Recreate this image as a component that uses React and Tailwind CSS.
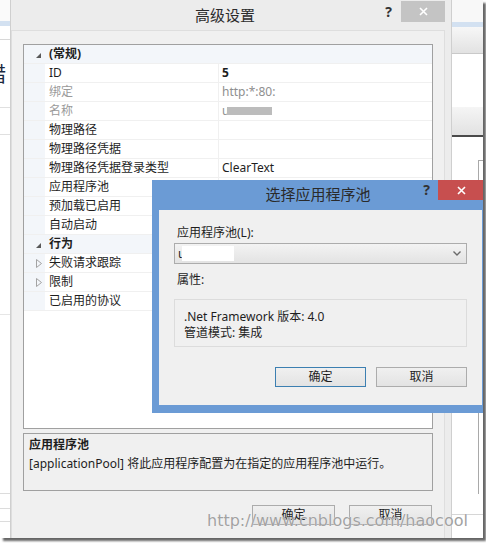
import React from "react";

function CatTri() {
  return (
    <svg width="5" height="5" viewBox="0 0 5 5">
      <polygon points="5,0 5,5 0,5" fill="#595959" />
    </svg>
  );
}

function ExpTri() {
  return (
    <svg width="6" height="9" viewBox="0 0 6 9">
      <polygon points="0.5,0.5 5.5,4.5 0.5,8.5" fill="none" stroke="#a3a3a3" strokeWidth="1" />
    </svg>
  );
}

function CatRow({ label }) {
  return (
    <div className="flex h-[19px] border-b border-[#f0f0f0] bg-[#f3f6fa]">
      <div className="w-[21px] flex items-center justify-end pr-[4px] pt-[2px]">
        <CatTri />
      </div>
      <div className="flex-1 pl-[4px] leading-[18px] font-bold text-[#1e1e1e]">{label}</div>
    </div>
  );
}

function Row({ name, value, gray, bold, expand, children }) {
  return (
    <div className="flex h-[19px] border-b border-[#f0f0f0]">
      <div className="w-[21px] bg-[#f3f6fa] flex items-center justify-end pr-[3px]">
        {expand ? <ExpTri /> : null}
      </div>
      <div
        className={`w-[174px] border-r border-[#f0f0f0] pl-[4px] leading-[18px] ${
          gray ? "text-[#9a9a9a]" : "text-[#1e1e1e]"
        }`}
      >
        {name}
      </div>
      <div
        className={`flex-1 pl-[3px] leading-[18px] flex items-center ${
          gray ? "text-[#8f8f8f]" : "text-[#1e1e1e]"
        } ${bold ? "font-bold" : ""}`}
      >
        {value}
        {children}
      </div>
    </div>
  );
}

function WinButton({ children, primary }) {
  return (
    <div
      className={`flex items-center justify-center border bg-gradient-to-b from-[#f0f0f0] to-[#e3e3e3] text-[#1e1e1e] ${
        primary ? "border-[#3c7fb1]" : "border-[#acacac]"
      }`}
    >
      {children}
    </div>
  );
}

function LeftStrip() {
  return (
    <div className="w-[10px] shrink-0 flex flex-col bg-white overflow-hidden">
      <div className="h-[21px] bg-[#fafafa]" />
      <div className="h-[5px] bg-[#d3e1f1]" />
      <div className="h-[14px] border-b border-[#d8d8d8]" />
      <div className="h-[24px]" />
      <div className="h-[22px] -ml-[14px] text-[20px] leading-[22px] text-[#1a2a40] whitespace-nowrap">措</div>
      <div className="h-[22px] border-b border-[#e0e0e0]" />
      <div className="h-[27px] border-b border-[#e0e0e0]" />
      <div className="h-[180px] border-b border-[#e6e6e6]" />
      <div className="h-[179px] border-b border-[#dcdcdc]" />
      <div className="h-[15px] border-b border-[#dcdcdc]" />
      <div className="h-[13px] border-b border-[#dcdcdc]" />
      <div className="flex-1" />
    </div>
  );
}

function RightStrip() {
  return (
    <div className="w-[31px] shrink-0 flex flex-col bg-white overflow-hidden">
      <div className="h-[22px] bg-[#f8f8f8]" />
      <div className="h-[5px] bg-[#d3e1f1]" />
      <div className="h-[27px] bg-gradient-to-b from-[#f7f7f7] to-[#e2e2e2] border-b border-[#c9c9c9]" />
      <div className="h-[53px] bg-white" />
      <div className="h-[28px] bg-gradient-to-b from-[#f5f5f5] to-[#e2e2e2]" />
      <div className="h-[2px] bg-[#4a4a4a]" />
      <div className="h-[23px]" />
      <div className="h-[334px] ml-[26px] border-l border-t border-[#a9a9a9]" />
      <div className="h-[21px] border-b border-[#d6d6d6]" />
      <div className="flex-1" />
    </div>
  );
}

function OuterDialog() {
  return (
    <div className="w-[442px] shrink-0 flex flex-col bg-[#ececec] border-l border-r border-[#cfcfcf]">
      <div className="h-[30px] shrink-0 flex items-start">
        <div className="flex-1" />
        <div className="text-[15px] leading-[30px] text-[#2b2b2b] -ml-[6px]">高级设置</div>
        <div className="flex-1 flex justify-end items-start pr-[6px]">
          <div className="text-[14px] font-bold leading-[20px] mt-[2px] mr-[9px] text-[#333]">?</div>
          <div className="w-[44px] h-[21px] mt-[1px] bg-[#c4c4c4] flex items-center justify-center">
            <svg width="9" height="9" viewBox="0 0 9 9">
              <path d="M1 1 L8 8 M8 1 L1 8" stroke="#fff" strokeWidth="1.6" />
            </svg>
          </div>
        </div>
      </div>
      <div className="flex-1 mr-[6px] bg-[#f0f0f0] border-l border-t border-r border-[#dedede] px-[11px] pt-[13px] flex flex-col">
        <div className="h-[385px] border border-[#a0a0a0] bg-white flex flex-col">
          <CatRow label="(常规)" />
          <Row name="ID" value="5" bold />
          <Row name="绑定" value="http:*:80:" gray />
          <Row name="名称" value="u" gray>
            <div className="ml-[-2px] w-[45px] h-[8px] bg-[#bcbcbc] blur-[0.5px]" />
          </Row>
          <Row name="物理路径" value="" />
          <Row name="物理路径凭据" value="" />
          <Row name="物理路径凭据登录类型" value="ClearText" />
          <Row name="应用程序池" value="" />
          <Row name="预加载已启用" value="" />
          <Row name="自动启动" value="" />
          <CatRow label="行为" />
          <Row name="失败请求跟踪" value="" expand />
          <Row name="限制" value="" expand />
          <Row name="已启用的协议" value="" />
        </div>
        <div className="mt-[4px] h-[58px] border border-[#a0a0a0] bg-[#f0f0f0] pl-[5px] pt-[1px] text-[#1e1e1e]">
          <div className="font-bold leading-[19px]">应用程序池</div>
          <div className="leading-[19px]">[applicationPool] 将此应用程序配置为在指定的应用程序池中运行。</div>
        </div>
        <div className="mt-[14px] flex justify-end gap-[14px] pr-[1px] h-[24px]">
          <div className="w-[83px] flex flex-col">
            <WinButton>确定</WinButton>
          </div>
          <div className="w-[83px] flex flex-col">
            <WinButton>取消</WinButton>
          </div>
        </div>
      </div>
    </div>
  );
}

function InnerDialog() {
  return (
    <div className="absolute left-[152px] top-[180px] w-[337px] h-[233px] bg-[#6b9bd5] flex flex-col">
      <div className="h-[30px] shrink-0 flex items-start">
        <div className="flex-1" />
        <div className="text-[15px] leading-[28px] text-[#2a2a2a]">选择应用程序池</div>
        <div className="flex-1 flex justify-end items-start pr-[5px]">
          <div className="text-[14px] font-bold leading-[18px] mt-[1px] mr-[8px] text-[#333]">?</div>
          <div className="w-[46px] h-[20px] bg-[#c74f4f] flex items-center justify-center">
            <svg width="9" height="9" viewBox="0 0 9 9">
              <path d="M1 1 L8 8 M8 1 L1 8" stroke="#fff" strokeWidth="1.6" />
            </svg>
          </div>
        </div>
      </div>
      <div className="mx-[7px] mb-[8px] flex-1 bg-[#f0f0f0] px-[15px] pt-[15px] flex flex-col text-[#1e1e1e]">
        <div className="pl-[3px] leading-[16px]">应用程序池(L):</div>
        <div className="mt-[2px] h-[21px] border border-[#acacac] bg-gradient-to-b from-[#f3f3f3] to-[#e3e3e3] flex items-center">
          <div className="pl-[3px] leading-[16px]">ι</div>
          <div className="w-[52px] h-[15px] bg-white" />
          <div className="flex-1" />
          <svg className="mr-[5px]" width="8" height="5" viewBox="0 0 8 5">
            <path d="M0.5 0.5 L4 4 L7.5 0.5" fill="none" stroke="#6a6a6a" strokeWidth="1.4" />
          </svg>
        </div>
        <div className="mt-[8px] pl-[3px] leading-[16px]">属性:</div>
        <div className="mt-[11px] h-[48px] border border-[#dcdcdc] pl-[9px] pt-[9px]">
          <div className="leading-[16px]">.Net Framework 版本: 4.0</div>
          <div className="leading-[16px]">管道模式: 集成</div>
        </div>
        <div className="mt-[20px] h-[25px] flex justify-end gap-[10px]">
          <div className="w-[91px] flex flex-col">
            <WinButton primary>确定</WinButton>
          </div>
          <div className="w-[91px] flex flex-col">
            <WinButton>取消</WinButton>
          </div>
        </div>
      </div>
    </div>
  );
}

export default function App() {
  return (
    <div className="w-[486px] h-[543px] bg-white font-['Noto_Sans','Noto_Sans_CJK_SC',sans-serif] text-[12px]">
      <div className="relative w-[483px] h-[538px] overflow-hidden flex bg-white shadow-[3px_3px_2px_rgba(0,0,0,0.6)]">
        <LeftStrip />
        <OuterDialog />
        <RightStrip />
        <InnerDialog />
        <div className="absolute left-[207px] top-[511px] font-['DejaVu_Sans',sans-serif] text-[16px] leading-[20px] text-[#a2a2a2] [text-shadow:0_0_1px_#ffffff] whitespace-nowrap">
          http://www.cnblogs.com/haocool
        </div>
      </div>
    </div>
  );
}
